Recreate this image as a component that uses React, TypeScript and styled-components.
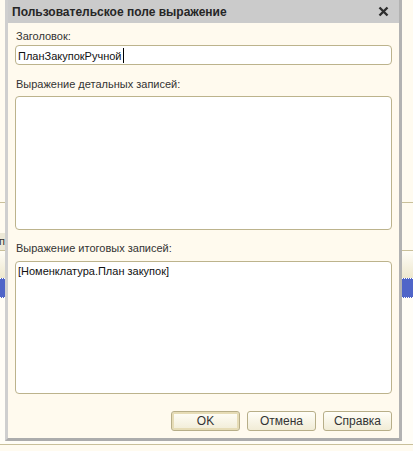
import React from 'react'
import styled, { createGlobalStyle, css } from 'styled-components'

const Global = createGlobalStyle`
  html, body {
    margin: 0;
    padding: 0;
    background: #fffbf0;
  }
  body {
    font-family: "Liberation Sans", Arial, sans-serif;
  }
`

const Screen = styled.div`
  position: relative;
  width: 413px;
  height: 451px;
  overflow: hidden;
  background: #fffbf0;
`

/* the 1C window behind the dialog */
const Backdrop = styled.div`
  display: flex;
  flex-direction: column;
  height: 100%;
`

const BackBand = styled.div<{ h: number; bg?: string; line?: boolean }>`
  height: ${(p) => p.h}px;
  flex: none;
  background: ${(p) => p.bg || '#fffbf0'};
  ${(p) => p.line && css`border-bottom: 1px solid #c9c09a;`}
`

const HeaderRow = styled.div`
  display: flex;
  flex: none;
  height: 17px;
  border-bottom: 1px solid #c9c09a;
`

const HeaderCell = styled.div`
  width: 5px;
  overflow: hidden;
  background: #ece8d6;
  color: #333;
  font-size: 11px;
  line-height: 16px;
  white-space: nowrap;
  direction: rtl;
`

const SelectedRow = styled.div`
  height: 18px;
  flex: none;
  background: #4f65c8;
  border-top: 1px dotted #fff;
  border-bottom: 1px dotted #fff;
`

const Dialog = styled.div`
  position: absolute;
  left: 5px;
  top: 0;
  width: 397px;
  height: 441px;
  box-sizing: border-box;
  display: flex;
  flex-direction: column;
  border-left: 3px solid #cfcfcf;
  border-right: 3px solid #b2b2b2;
  border-bottom: 3px solid #acacac;
  background: #fffaee;
`

const TitleBar = styled.div`
  height: 23px;
  flex: none;
  display: flex;
  align-items: center;
  justify-content: space-between;
  padding: 0 10px 0 4px;
  background: #cbcbcb;
  font-weight: bold;
  font-size: 12px;
  color: #262626;
`

const Body = styled.div`
  flex: 1;
  display: flex;
  flex-direction: column;
  padding: 6px 7px 0 7px;
`

const Label = styled.div<{ gap: number }>`
  margin-top: ${(p) => p.gap}px;
  height: 14px;
  font-size: 11px;
  line-height: 14px;
  color: #333;
  padding-left: 1px;
`

const Field = styled.div<{ h: number; gap: number }>`
  margin-top: ${(p) => p.gap}px;
  height: ${(p) => p.h}px;
  box-sizing: border-box;
  border: 1px solid #bcb38c;
  border-radius: 4px;
  background: #fff;
  padding: 2px 2px;
  font-size: 11px;
  line-height: 14px;
  color: #111;
  white-space: nowrap;
`

const Caret = styled.span`
  display: inline-block;
  width: 1px;
  height: 15px;
  margin-left: 1px;
  background: #000;
  vertical-align: -3px;
`

const Buttons = styled.div`
  margin-top: 17px;
  display: flex;
  justify-content: flex-end;
  gap: 7px;
`

const Button = styled.div<{ primary?: boolean }>`
  width: 69px;
  height: 20px;
  box-sizing: border-box;
  display: flex;
  align-items: center;
  justify-content: center;
  border: 1px solid #b7ae88;
  border-radius: 3px;
  background: linear-gradient(#fffef8, #f1ecd6);
  font-size: 12px;
  color: #333;
  ${(p) => p.primary && css`
    box-shadow: inset 0 0 0 2px #e6dcb6;
  `}
`

const Close = () => (
  <svg width="11" height="11" viewBox="0 0 11 11">
    <path d="M1.5 1.5 L9.5 9.5 M9.5 1.5 L1.5 9.5" stroke="#2e2e2e" strokeWidth="2.4" />
  </svg>
)

export default function App() {
  return (
    <Screen>
      <Global />
      <Backdrop>
        <BackBand h={202} line />
        <BackBand h={30} />
        <HeaderRow>
          <HeaderCell>п</HeaderCell>
        </HeaderRow>
        <BackBand h={27} bg="linear-gradient(#fffdf6, #eee8cf)" />
        <SelectedRow />
        <BackBand h={146} bg="#fffdf6" line />
        <BackBand h={6} />
      </Backdrop>
      <Dialog>
        <TitleBar>
          <span>Пользовательское поле выражение</span>
          <Close />
        </TitleBar>
        <Body>
          <Label gap={0}>Заголовок:</Label>
          <Field h={20} gap={2}>
            ПланЗакупокРучной<Caret />
          </Field>
          <Label gap={12}>Выражение детальных записей:</Label>
          <Field h={134} gap={5} />
          <Label gap={11}>Выражение итоговых записей:</Label>
          <Field h={133} gap={6}>[Номенклатура.План закупок]</Field>
          <Buttons>
            <Button primary>OK</Button>
            <Button>Отмена</Button>
            <Button>Справка</Button>
          </Buttons>
        </Body>
      </Dialog>
    </Screen>
  )
}
